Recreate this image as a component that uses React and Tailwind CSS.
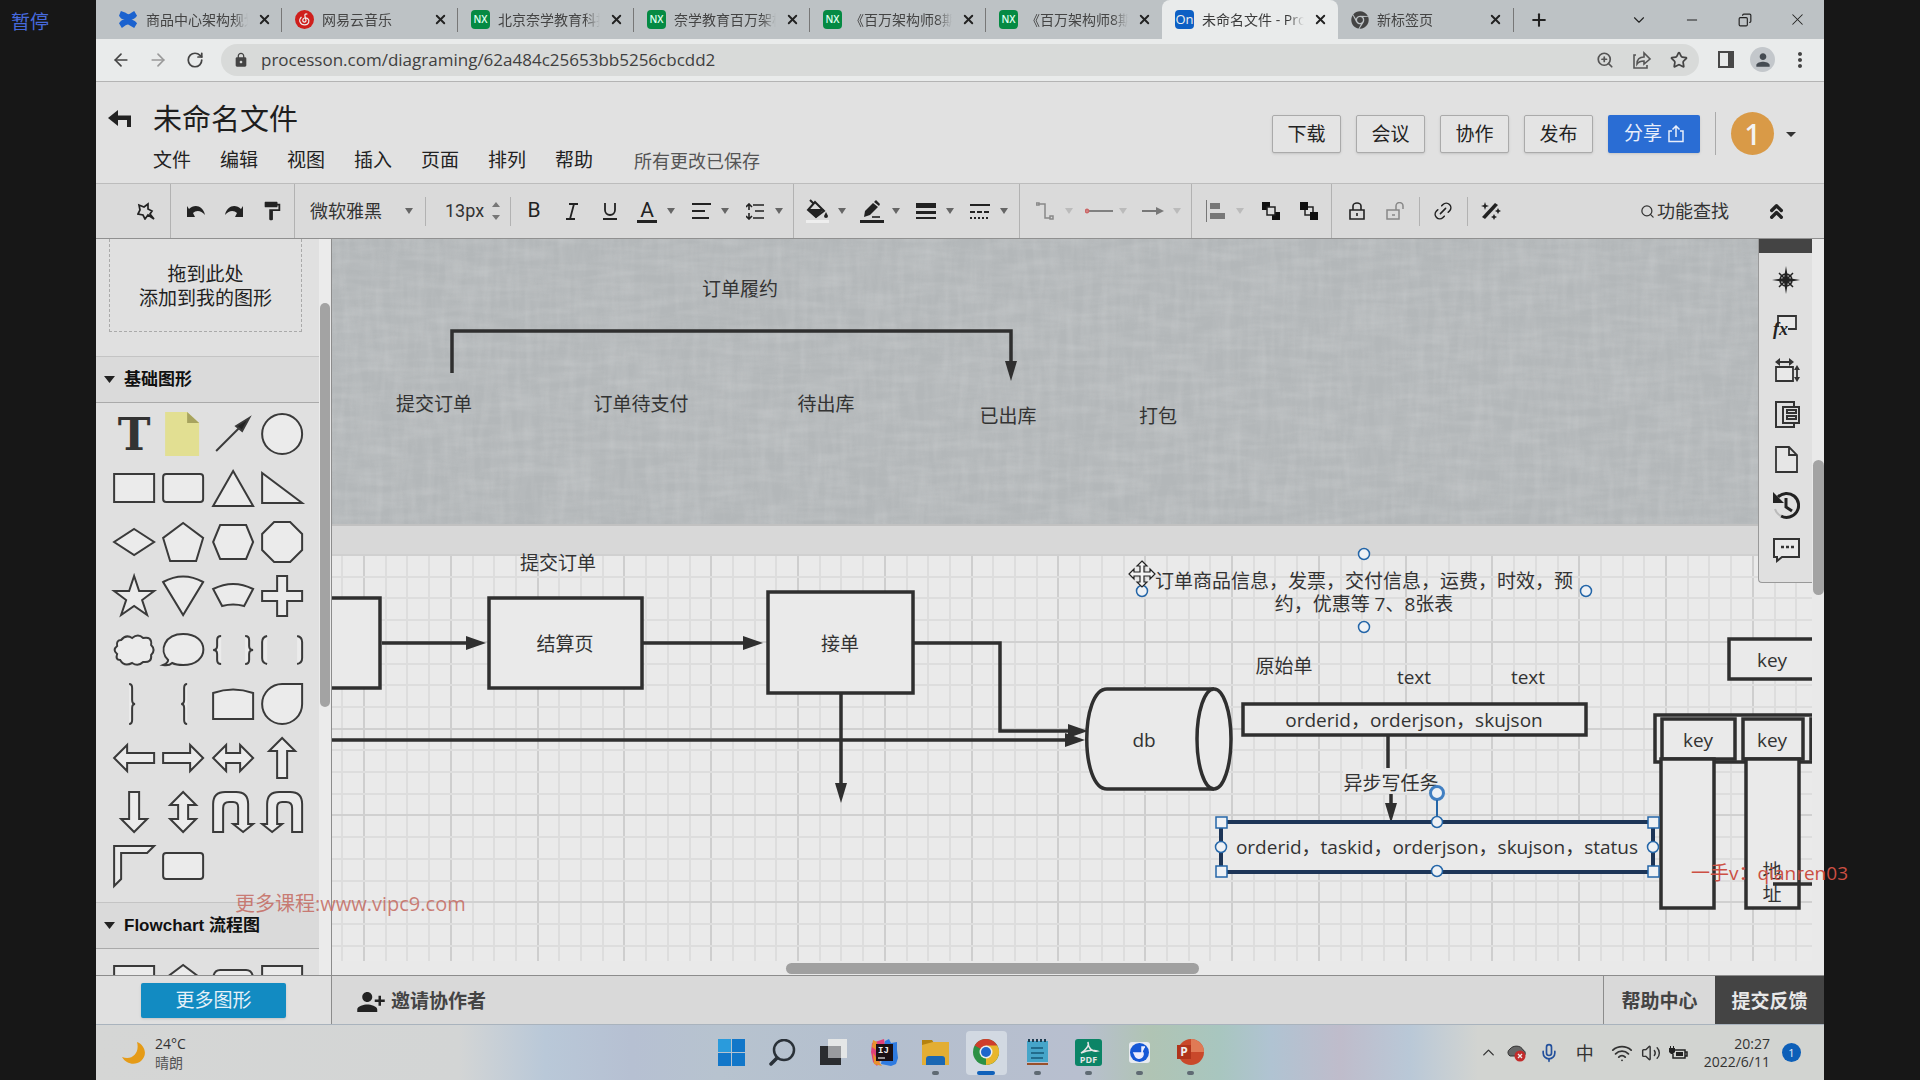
import React from 'react';
import {
  ArrowLeft, ArrowRight, RotateCw, Star, X, Plus, ChevronDown, ChevronUp, Minus, ZoomIn,
  Search, Link2, Mic, Wifi, Volume2, ChevronsUp, Copy,
} from 'lucide-react';
import {
  MdLock, MdPerson, MdMoreVert, MdFormatPaint, MdPersonAddAlt1, MdArrowDropDown,
} from 'react-icons/md';
import { FaChrome } from 'react-icons/fa';

const tabs = [
  { title: '商品中心架构规划', icon: 'confluence' },
  { title: '网易云音乐', icon: 'music' },
  { title: '北京奈学教育科技有', icon: 'nx' },
  { title: '奈学教育百万架构师', icon: 'nx' },
  { title: '《百万架构师8期》', icon: 'nx' },
  { title: '《百万架构师8期》', icon: 'nx' },
  { title: '未命名文件 - ProcessOn', icon: 'on', active: true },
  { title: '新标签页', icon: 'chrome' },
];

const menus = ['文件', '编辑', '视图', '插入', '页面', '排列', '帮助'];

const Favicon = ({ type }) => {
  if (type === 'confluence') {
    return (
      <svg className="size-[19px] shrink-0" viewBox="0 0 20 20" fill="#1b62cf">
        <path d="M2 1l5 2c2 2 4 2 6 0l3-2 3 5c-3 4-5 4-6 4s3 0 6 4l-3 5-5-3c-1-1-2-1-4 0l-4 3-3-5c2-3 4-4 6-4-3 0-4-1-6-4z" />
      </svg>
    );
  }
  if (type === 'music') {
    return (
      <svg className="size-[19px] shrink-0" viewBox="0 0 20 20">
        <circle cx="10" cy="10" r="10" fill="#cf1f1c" />
        <path d="M13 4.500c-2-1-3 0-2.500 2l1 4a1.700 1.700 0 1 1-3.200 0c0-2 3-3 5-1.500 2.500 2 1.500 6.500-3 6.700-5 0-7-5-3.500-8.500" fill="none" stroke="#eee" strokeWidth="1.300" />
      </svg>
    );
  }
  if (type === 'nx') {
    return <span className="flex size-[19px] shrink-0 items-center justify-center rounded bg-[#058a43] text-[10px] font-semibold text-[#dfe]">NX</span>;
  }
  if (type === 'on') {
    return <span className="flex size-[19px] shrink-0 items-center justify-center rounded-sm bg-[#0d5fc4] text-[13px] text-[#eee]">On</span>;
  }
  return <FaChrome className="size-[18px] shrink-0 text-[#444]" />;
};

const TabStrip = () => (
  <div className="flex h-[39px] shrink-0 items-center bg-[#bdc2c5] pl-[10px]">
    {tabs.map((tab, i) => (
      <div
        key={i}
        className={
          tab.active
            ? 'flex h-full w-44 items-center rounded-t-lg bg-[#e9ebeb] pl-[13px] text-[#3c3c3c]'
            : 'flex h-full w-44 items-center pl-[13px] text-[#444]'
        }
      >
        <button className="flex items-center gap-2 text-left">
          <Favicon type={tab.icon} />
          <span className="w-[102px] overflow-hidden text-sm whitespace-nowrap [mask-image:linear-gradient(to_right,black_85%,transparent)]">{tab.title}</span>
        </button>
        <button className="ml-[6px] flex w-5 justify-center" aria-label="关闭标签页">
          <X className="size-[15px] text-[#222]" strokeWidth={3} />
        </button>
        {!tab.active && i !== 5 && <span className="ml-auto h-6 w-px bg-[#777]" />}
      </div>
    ))}
    <button className="ml-[15px]" aria-label="新建标签页"><Plus className="size-[20px] text-[#222]" strokeWidth={2.500} /></button>
    <div className="ml-auto flex h-8 items-center text-[#222]">
      <button className="flex w-[53px] justify-center" aria-label="搜索标签页"><ChevronDown className="size-[18px]" strokeWidth={1.500} /></button>
      <button className="flex w-[53px] justify-center" aria-label="最小化"><Minus className="size-4" strokeWidth={1.500} /></button>
      <button className="flex w-[53px] justify-center" aria-label="还原"><Copy className="size-[14px] -scale-x-100" strokeWidth={2} /></button>
      <button className="flex w-[53px] justify-center" aria-label="关闭"><X className="size-[19px]" strokeWidth={1.300} /></button>
    </div>
  </div>
);

const AddressBar = () => (
  <div className="flex h-[43px] shrink-0 items-center border-b border-[#b4b4b4] bg-[#e9ebeb] px-[6px] pb-px">
    <button className="flex w-[37px] justify-center" aria-label="后退"><ArrowLeft className="size-5 text-[#444]" /></button>
    <button className="flex w-[37px] justify-center" aria-label="前进"><ArrowRight className="size-5 text-[#999]" /></button>
    <button className="flex w-[37px] justify-center" aria-label="刷新"><RotateCw className="size-[18px] text-[#444]" strokeWidth={2.300} /></button>
    <div className="ml-2 flex h-8 flex-1 items-center rounded-full bg-[#d8dad9] pr-[2px] pl-3">
      <MdLock className="size-4 text-[#444]" />
      <input
        aria-label="地址"
        className="ml-3 flex-1 bg-transparent text-[17px] text-[#3f3f3f] outline-none"
        defaultValue="processon.com/diagraming/62a484c25653bb5256cbcdd2"
      />
      <button className="flex w-[37px] justify-center" aria-label="缩放"><ZoomIn className="size-[18px] text-[#555]" strokeWidth={2.300} /></button>
      <button className="flex w-[37px] justify-center" aria-label="分享">
        <svg className="size-5 text-[#555]" viewBox="0 0 20 20" fill="none" stroke="currentColor" strokeWidth="1.600">
          <path d="M4 5H2v13h13v-3M5 14c0-5 3-7 7-7V3l6 6-6 5v-3c-3 0-5 0-7 3z" />
        </svg>
      </button>
      <button className="flex w-[37px] justify-center" aria-label="收藏"><Star className="size-[18px] text-[#444]" strokeWidth={2.300} /></button>
    </div>
    <button className="ml-2 flex w-[37px] justify-center" aria-label="侧边栏">
      <span className="h-[17px] w-4 border-2 border-r-[6px] border-[#484848]" />
    </button>
    <button className="flex w-[37px] justify-center" aria-label="个人资料">
      <span className="flex size-[25px] items-center justify-center rounded-full bg-[#c3c7cb]"><MdPerson className="size-5 text-[#454b52]" /></span>
    </button>
    <button className="flex w-[37px] justify-center" aria-label="更多"><MdMoreVert className="size-6 text-[#444]" /></button>
  </div>
);

const Header = () => (
  <header className="flex h-[101px] shrink-0 items-center bg-[#e1e1e1] pr-[21px] pl-3">
    <div className="flex pt-3">
      <button className="mt-[10px] h-5 w-[45px]" aria-label="返回">
        <svg width="24" height="18" viewBox="0 0 24 18">
          <path d="M0 8L10 0v5.500h13V17h-4V10H10v6z" fill="#222" />
        </svg>
      </button>
      <div>
        <h1 className="text-[29px] leading-10 text-[#1e1e1e]">未命名文件</h1>
        <nav className="mt-1 flex h-9 items-center gap-[29px] text-[19px] text-[#222]">
          {menus.map((m) => <button key={m}>{m}</button>)}
          <span className="ml-3 text-lg text-[#555]">所有更改已保存</span>
        </nav>
      </div>
    </div>
    <div className="ml-auto flex items-center gap-[15px] pt-[2px] text-[19px] text-[#222]">
      {['下载', '会议', '协作', '发布'].map((b) => (
        <button key={b} className="h-[38px] w-[69px] rounded-xs border border-[#aaa] bg-[#e4e4e4] leading-[34px] shadow-sm">{b}</button>
      ))}
      <button className="flex h-[38px] w-[92px] items-center justify-center gap-[6px] rounded-xs bg-[#2a6dd4] text-[#e8eefa] shadow-sm">
        分享
        <svg width="16" height="18" viewBox="0 0 16 18" fill="none" stroke="currentColor" strokeWidth="1.500">
          <path d="M4 6H1v10.500h14V6h-3M8 12V1M4.500 4.500L8 1l3.500 3.500" />
        </svg>
      </button>
      <span className="h-[43px] w-px bg-[#aaa]" />
      <div className="flex items-center">
        <span className="flex size-[43px] items-center justify-center rounded-full bg-[#d99a47] text-[28px] leading-none font-semibold text-[#f3f3f3]">1</span>
        <button className="ml-[5px]" aria-label="账户菜单"><MdArrowDropDown className="size-6 text-[#333]" /></button>
      </div>
    </div>
  </header>
);

const Caret = ({ dim }) => (
  <svg className={dim ? 'size-2 text-[#bbb]' : 'size-2 text-[#666]'} viewBox="0 0 8 8" fill="currentColor"><path d="M0 1h8L4 7z" /></svg>
);

const Tool = ({ label, children }) => (
  <button className="flex h-9 w-[38px] items-center justify-center text-[#222]" aria-label={label}>{children}</button>
);

const DropTool = ({ label, dim, children }) => (
  <button className="flex h-9 w-[54px] items-center text-[#222]" aria-label={label} disabled={dim}>
    <span className="flex w-9 justify-center">{children}</span>
    <span className="ml-[2px]"><Caret dim={dim} /></span>
  </button>
);

const Line = ({ children, className, w = 20, h = 20, sw = 1.8 }) => (
  <svg className={className} width={w} height={h} viewBox={`0 0 ${w} ${h}`} fill="none" stroke="currentColor" strokeWidth={sw}>{children}</svg>
);

const Divider = () => <span className="h-[29px] w-px bg-[#b2b2b2]" />;

const FormatBar = () => (
  <div className="flex h-14 shrink-0 items-center border-t border-b border-t-[#bcbcbc] border-b-[#909090] bg-[#dadada]">
    <div className="flex h-full w-[75px] items-center border-r border-[#b2b2b2] pl-[31px]">
      <Tool label="标记">
        <Line w={18} h={18} sw={1.7}><path d="M11 2L7 5 2 3l1 5-2 4 5 1 2 4 3-4 6 4-4-5 2-3-4-2z" /></Line>
      </Tool>
    </div>
    <div className="flex h-full w-31 items-center border-r border-[#b2b2b2] pl-[6px]">
      <Tool label="撤销"><svg width="18" height="13" viewBox="0 0 18 13" fill="currentColor"><path d="M0 1l2 3c5-5 14-4 16 6-4-5-9-5-12-2l2 4H0z" /></svg></Tool>
      <Tool label="重做"><svg width="18" height="13" viewBox="0 0 18 13" fill="currentColor"><path d="M18 1l-2 3C11-1 2 0 0 10c4-5 9-5 12-2l-2 4h8z" /></svg></Tool>
      <Tool label="格式刷"><MdFormatPaint className="size-[22px]" /></Tool>
    </div>
    <div className="flex h-full w-[499px] items-center border-r border-[#b2b2b2]">
      <div className="flex w-[130px] items-center pl-[15px]">
        <select aria-label="字体" className="w-[95px] appearance-none bg-transparent text-lg text-[#333] outline-none" defaultValue="微软雅黑">
          <option>微软雅黑</option>
        </select>
        <Caret />
      </div>
      <Divider />
      <div className="flex w-[84px] items-center pl-[19px]">
        <input aria-label="字号" className="w-[47px] bg-transparent font-['Roboto'] text-lg text-[#333] outline-none" defaultValue="13px" />
        <svg width="8" height="20" viewBox="0 0 8 20" fill="#777"><path d="M0 6h8L4 1zM0 14h8l-4 5z" /></svg>
      </div>
      <Divider />
      <div className="flex pl-1">
        <Tool label="加粗"><span className="font-['Roboto'] text-[21px]">B</span></Tool>
        <Tool label="斜体"><Line w={14} h={17}><path d="M4 1h9M1 16h9M9 1L5 16" /></Line></Tool>
        <Tool label="下划线"><Line w={14} h={17}><path d="M2 0v7a5 5 0 0 0 10 0V0M0 16h14" /></Line></Tool>
        <DropTool label="文字颜色">
          <span className="border-b-[3px] border-[#222] px-[3px] font-['Roboto'] text-[21px] leading-5">A</span>
        </DropTool>
        <DropTool label="对齐"><Line w={19} h={16}><path d="M0 1h19M0 8h13M0 15h17" /></Line></DropTool>
        <DropTool label="行高"><Line w={18} h={17} sw={1.6}><path d="M7 2h11M9 8h9M7 15h11M3 1v6M3 10v6M0 4l3-3 3 3M0 13l3 3 3-3" /></Line></DropTool>
      </div>
    </div>
    <div className="flex h-full w-[226px] items-center border-r border-[#b2b2b2] pl-[6px]">
      <DropTool label="填充">
        <svg width="24" height="24" viewBox="0 0 24 24">
          <path d="M4 1l4 4M9 3l9 9-8 6-8-7z" fill="none" stroke="#222" strokeWidth="2" />
          <path d="M2 10h16l-8 9zM20 13l2 4a2 2 0 1 1-4 0z" fill="#222" />
          <path d="M0 21h23v3H0z" fill="#eee" />
        </svg>
      </DropTool>
      <DropTool label="线条颜色">
        <svg width="24" height="24" viewBox="0 0 24 24">
          <path d="M4 18l1-6 8-8 5 4-8 8zM14 3l2-2 4 4-1 2z" fill="#222" />
          <path d="M12 18h8" stroke="#222" strokeWidth="1.600" />
          <path d="M0 21h24v3H0z" fill="#222" />
        </svg>
      </DropTool>
      <DropTool label="线宽">
        <svg width="20" height="17" viewBox="0 0 20 17" fill="currentColor"><path d="M0 0h20v5H0zM0 8h20v3H0zM0 14h20v2H0z" /></svg>
      </DropTool>
      <DropTool label="线型">
        <Line w={20} h={17} sw={2}><path d="M0 2h20" /><path d="M0 9h20" strokeDasharray="5 2" /><path d="M0 15h20" strokeDasharray="2 2" /></Line>
      </DropTool>
    </div>
    <div className="flex h-full w-[172px] items-center border-r border-[#b2b2b2] pl-[7px]">
      <DropTool label="连线类型" dim>
        <Line w={18} h={18} sw={1.5} className="text-[#888]"><path d="M3 2h6v14h5M0 1h3v2H0zM14 14h3v3h-3z" /></Line>
      </DropTool>
      <DropTool label="起点" dim>
        <Line w={28} h={10} sw={1.8} className="text-[#777]"><path d="M3 5h25" /><circle cx="2" cy="5" r="1.500" stroke="#c66" /></Line>
      </DropTool>
      <DropTool label="终点" dim>
        <svg width="22" height="10" viewBox="0 0 22 10" fill="#777"><path d="M0 4h14V1l8 4-8 4V6H0z" /></svg>
      </DropTool>
    </div>
    <div className="flex h-full w-[140px] items-center border-r border-[#b2b2b2] pl-[6px]">
      <DropTool label="对齐方式" dim>
        <svg width="20" height="22" viewBox="0 0 20 22" fill="#777"><path d="M0 0h1v22H0zM4 3h10v6H4zM4 13h15v6H4z" /></svg>
      </DropTool>
      <Tool label="置于顶层">
        <svg width="18" height="18" viewBox="0 0 18 18"><path d="M0 0h8v8H0zM10 10h8v8h-8z" fill="#111" /><path d="M5 5h8v8H5z" fill="#ddd" stroke="#222" strokeWidth="1.500" /></svg>
      </Tool>
      <Tool label="置于底层">
        <svg width="18" height="18" viewBox="0 0 18 18"><path d="M5 5h8v8H5z" fill="#ddd" stroke="#222" strokeWidth="1.500" /><path d="M0 0h8v8H0zM10 10h8v8h-8z" fill="#111" /></svg>
      </Tool>
    </div>
    <div className="flex items-center pl-[6px]">
      <Tool label="锁定"><Line w={16} h={18} sw={1.6}><path d="M1 8h14v9H1zM4 8V4a4 3 0 0 1 8 0v4M8 11v3" /></Line></Tool>
      <Tool label="解锁"><Line w={18} h={18} sw={1.5} className="text-[#888]"><path d="M1 8h12v9H1zM10 8V4a3 3 0 0 1 7 0v3M6 13h3" /></Line></Tool>
      <span className="ml-[5px] flex"><Divider /></span>
      <span className="ml-1"><Tool label="链接"><Link2 className="size-[22px] -rotate-45" strokeWidth={1.700} /></Tool></span>
      <span className="ml-[5px] flex"><Divider /></span>
      <span className="ml-1">
        <Tool label="美化">
          <svg width="20" height="18" viewBox="0 0 20 18" fill="currentColor">
            <path d="M1 15L14 1l3 2L4 17z" />
            <path d="M4 0l1 3 3 1-3 1-1 3-1-3-3-1 3-1zM17 6l1 2 2 1-2 1-1 2-1-2-2-1 2-1zM13 12l1 2 2 1-2 1-1 2-1-2-2-1 2-1z" />
          </svg>
        </Tool>
      </span>
    </div>
    <button className="ml-auto flex items-center gap-[2px] text-lg text-[#333]"><Search className="size-[15px]" strokeWidth={2} />功能查找</button>
    <button className="mr-9 ml-9" aria-label="收起"><ChevronsUp className="size-[23px] text-[#222]" strokeWidth={3.500} /></button>
  </div>
);

// library shapes, drawn around a centre of 0,0
const basicShapes = [
  'text', 'note', 'line', 'M20 0A20 20 0 1 1-20 0A20 20 0 1 1 20 0Z',
  'M-20-14H20V14H-20Z',
  'M-17-14H17Q20-14 20-11V11Q20 14 17 14H-17Q-20 14-20 11V-11Q-20-14-17-14Z',
  'M0-17L20 18H-20Z', 'M-20-15V15H20Z',
  'M0-13L20 0L0 13L-20 0Z', 'M0-19L20-4L13 19H-13L-20-4Z', 'M-13-17H13L20 0L13 17H-13L-20 0Z', 'M-8-20H8L20-8V8L8 20H-8L-20 8V-8Z',
  'M0-20L5-5H20L8 4L13 19L0 10L-13 19L-8 4L-20-5H-5Z', 'M-20-14Q0-25 20-14L0 19Z', 'M-20-7Q0-17 20-7L11 10Q0 7-11 10Z', 'M-5-20H5V-5H20V5H5V20H-5V5H-20V-5H-5Z',
  'M-13-10Q-8-16-2-12Q4-17 9-12Q18-14 17-5Q22 0 17 5Q18 13 9 12Q4 17-2 13Q-10 17-14 10Q-19 10-17 4Q-22 0-17-4Q-18-10-13-10Z',
  'M-15 10C-25 0-18-16 0-16C27-16 27 15 0 15Q-7 15-11 13Q-14 16-20 15Q-15 13-15 10Z',
  'M-12-14Q-16-14-16-10V-4Q-16 0-20 0Q-16 0-16 4V10Q-16 14-12 14M12-14Q16-14 16-10V-4Q16 0 20 0Q16 0 16 4V10Q16 14 12 14',
  'M-15-14Q-20-13-20-8V8Q-20 13-15 14M15-14Q20-13 20-8V8Q20 13 15 14',
  'M-5-20Q-2-20-2-16V-4Q-2 0 1 0Q-2 0-2 4V16Q-2 20-5 20', 'M4-20Q1-20 1-16V-4Q1 0-2 0Q1 0 1 4V16Q1 20 4 20', 'M-20-11Q0-18 20-11V15H-20Z', 'M0-20H20V0A20 20 0 1 1 0-20Z',
  'M-20 0L-7-13V-5H20V5H-7V13Z', 'M20 0L7-13V-5H-20V5H7V13Z', 'M-20 0L-7-13V-5H7V-13L20 0L7 13V5H-7V13Z', 'M0-20L13-7H5V20H-5V-7H-13Z',
  'M0 20L13 7H5V-20H-5V7H-13Z', 'M0-20L13-7H5V7H13L0 20L-13 7H-5V-7H-13Z',
  'M-20 20V-8Q-20-20-8-20H3Q15-20 15-8V12H20L10 20L0 12H5V-5Q5-10 0-10H-4Q-10-10-10-4V20Z',
  'M20 20V-8Q20-20 8-20H-3Q-15-20-15-8V12H-20L-10 20L0 12H-5V-5Q-5-10 0-10H4Q10-10 10-4V20Z',
  'M-20-20H20L13-13H-13V13L-20 20Z', 'M-17-13H17Q20-13 20-10V10Q20 13 17 13H-17Q-20 13-20 10V-10Q-20-13-17-13Z',
];

const flowShapes = ['M-20-14H20V14H-20Z', 'M0-15L20 0L0 15L-20 0Z', 'M-13-10H13Q20-10 20 0Q20 10 13 10H-13Q-20 10-20 0Q-20-10-13-10Z', 'M-20-14H20V10H-20Z'];

const LibraryShape = ({ d }) => (
  <svg className="h-[54px] w-full" viewBox="-25 -27 49 54" fill="#ebebeb" stroke="#3a3a3a" strokeWidth="2">
    {d === 'text' && <text y="16" textAnchor="middle" stroke="none" className="fill-[#333] font-['DejaVu_Serif'] text-[44px] font-bold">T</text>}
    {d === 'note' && (
      <g stroke="none">
        <path d="M-18-22H4L16-11V22H-18Z" fill="#e2df92" />
        <path d="M4-22V-11H16Z" fill="#a7a35e" />
      </g>
    )}
    {d === 'line' && (
      <g>
        <path d="M-17 17L8-8" />
        <path d="M16-16L3-8L9-3Z" fill="#222" />
      </g>
    )}
    {d.startsWith('M') && <path d={d} />}
  </svg>
);

const Section = ({ title, shapes }) => (
  <section>
    <h2 className="border-t border-b border-t-[#c4c4c4] border-b-[#aaa] bg-[#dadada]">
      <button className="flex h-[45px] w-full items-center gap-[9px] pl-2 font-['Liberation_Sans','Noto_Sans_CJK_SC',sans-serif] text-[17px] font-bold text-[#111]">
        <svg width="11" height="7" viewBox="0 0 11 7" fill="#222"><path d="M0 0h11L5.500 7z" /></svg>
        {title}
      </button>
    </h2>
    <div className="grid grid-cols-4 px-[13px] pt-1 pb-[9px]">
      {shapes.map((d, i) => <LibraryShape key={i} d={d} />)}
    </div>
  </section>
);

const ShapePanel = () => (
  <aside className="flex w-[236px] shrink-0 flex-col border-r border-[#8c8c8c] bg-[#e0e0e0]">
    <div className="flex min-h-0 flex-1">
      <div className="min-w-0 flex-1 overflow-hidden">
        <div className="mr-[17px] mb-6 ml-[13px] flex h-[93px] flex-col justify-center border border-t-0 border-dashed border-[#aaa] pt-px text-center text-[19px] leading-6 text-[#222]">
          <p>拖到此处</p>
          <p>添加到我的图形</p>
        </div>
        <Section title="基础图形" shapes={basicShapes} />
        <Section title="Flowchart 流程图" shapes={flowShapes} />
      </div>
      <div className="w-3 bg-[#ebebeb] pt-16 pl-px">
        <div className="h-[404px] w-[10px] rounded-full bg-[#a3a3a3]" />
      </div>
    </div>
    <div className="flex h-[49px] shrink-0 items-center border-t border-[#8c8c8c] pl-[45px]">
      <button className="h-[35px] w-[145px] rounded-xs bg-[#128bc2] text-[19px] leading-8 text-[#e6f1f8] shadow-sm">更多图形</button>
    </div>
  </aside>
);

const labels = [
  [740, 289, '订单履约'], [434, 404, '提交订单'], [641, 404, '订单待支付'], [826, 404, '待出库'],
  [1008, 416, '已出库'], [1158, 416, '打包'], [558, 563, '提交订单'], [565, 644, '结算页'], [840, 644, '接单'],
  [1284, 666, '原始单'], [1364, 581, '订单商品信息，发票，交付信息，运费，时效，预'], [1364, 604, '约，优惠等 7、8张表'],
  [1391, 783, '异步写任务'], [1772, 871, '地'], [1772, 894, '址'],
  [1144, 740, 'db'], [1414, 677, 'text'], [1528, 677, 'text'], [1414, 720, 'orderid，orderjson，skujson'],
  [1437, 847, 'orderid，taskid，orderjson，skujson，status'], [1772, 660, 'key'], [1698, 740, 'key'], [1772, 740, 'key'],
];

const boxes = [
  [300, 598, 80, 90], [489, 598, 153, 90], [768, 592, 145, 101], [1243, 704, 343, 31],
  [1729, 639, 120, 40], [1655, 715, 200, 47], [1662, 719, 73, 40], [1743, 719, 60, 40], [1811, 719, 60, 40],
  [1661, 759, 53, 149], [1746, 759, 53, 149],
];

const Head = ({ x, y, down }) => (
  <path d={down ? `M${x} ${y}l-6-20h12z` : `M${x} ${y}l-20-7v14z`} fill="#2f2f2f" stroke="none" />
);

const Grid = () => {
  const lines = [];
  for (let i = 0; i < 90; i++) {
    const x = Math.round(342.3 + i * 21.7);
    lines.push(<path key={`x${i}`} d={`M${x} 555V962`} stroke={i % 4 === 1 ? '#cecece' : '#dddddd'} />);
  }
  for (let i = 0; i < 19; i++) {
    const y = Math.round(555 + i * 21.7);
    lines.push(<path key={`y${i}`} d={`M332 ${y}H2400`} stroke={i % 4 === 0 ? '#d0d0d0' : '#dddddd'} />);
  }
  return <g strokeWidth="2">{lines}</g>;
};

const Diagram = () => (
  <svg className="block h-full w-full" role="img" aria-label="流程图">
    <defs>
      <filter id="weaveV" x="0" y="0" width="100%" height="100%">
        <feTurbulence type="fractalNoise" baseFrequency="0.12 0.02" numOctaves="3" seed="4" />
        <feColorMatrix values="0 0 0 0 1  0 0 0 0 1  0 0 0 0 1  0.700 0 0 0 -0.250" />
      </filter>
      <filter id="weaveH" x="0" y="0" width="100%" height="100%">
        <feTurbulence type="fractalNoise" baseFrequency="0.02 0.12" numOctaves="3" seed="9" />
        <feColorMatrix values="0 0 0 0 1  0 0 0 0 1  0 0 0 0 1  0.700 0 0 0 -0.250" />
      </filter>
    </defs>
    {/* scroll position of the sheet */}
    <g transform="translate(-332 -239)">
      <rect x="332" y="239" width="2100" height="285" fill="#b3b7b9" />
      <rect x="332" y="239" width="2100" height="285" filter="url(#weaveV)" opacity="0.250" />
      <rect x="332" y="239" width="2100" height="285" filter="url(#weaveH)" opacity="0.300" />
      <rect x="332" y="524" width="2100" height="31" fill="#d8d8d8" />
      <path d="M332 525H2400" stroke="#aaa" />
      <rect x="332" y="555" width="2100" height="900" fill="#eaeaea" />
      <Grid />
      <g fill="#eaeaea" stroke="#2f2f2f" strokeWidth="3.500">
        {boxes.map(([x, y, w, h], i) => <rect key={i} x={x} y={y} width={w} height={h} />)}
        <path d="M1214 689H1107C1080 689 1080 789 1107 789H1214" />
        <ellipse cx="1214" cy="739" rx="17" ry="50" />
        <g fill="none">
          <path d="M452 373V331H1011V365" />
          <path d="M382 643H470M643 643H748M914 643H1000V731H1072M332 740H1070" />
          <path d="M841 694V788M1388 735V768M1391 794V806M1773 884H1850" />
        </g>
      </g>
      <Head x={1011} y={381} down />
      <Head x={486} y={643} />
      <Head x={763} y={643} />
      <Head x={1088} y={731} />
      <Head x={1085} y={740} />
      <Head x={841} y={803} down />
      <Head x={1391} y={823} down />
      <rect x="1343" y="769" width="90" height="24" fill="#eaeaea" />
      <rect x="1221" y="822" width="432" height="50" fill="#eaeaea" stroke="#1d3557" strokeWidth="4" />
      {labels.map(([x, y, t], i) => (
        <text
          key={i}
          x={x}
          y={y + 7}
          textAnchor="middle"
          className="fill-[#333] font-['Open_Sans','Noto_Sans_CJK_SC',sans-serif] text-[19px]"
        >
          {t}
        </text>
      ))}
      <g fill="#eef1f5" stroke="#2466a8" strokeWidth="1.500">
        {[[1221, 822], [1653, 822], [1221, 871], [1653, 871]].map(([x, y]) => <rect key={`${x}-${y}`} x={x - 5} y={y - 5} width="11" height="11" />)}
        {[[1221, 847], [1653, 847], [1437, 822], [1437, 871], [1364, 554], [1364, 627], [1142, 591], [1586, 591]].map(([x, y]) => (
          <circle key={`${x}-${y}`} cx={x} cy={y} r="5.500" />
        ))}
        <circle cx="1437" cy="793" r="6.500" strokeWidth="3" stroke="#417fc2" />
        <path d="M1437 800V816" strokeWidth="2" />
      </g>
      {/* move cursor */}
      <path
        d="M1142 561l5 5h-3v6h6v-3l5 5-5 5v-3h-6v6h3l-5 5-5-5h3v-6h-6v3l-5-5 5-5v3h6v-6h-3z"
        fill="#f4f4f4" stroke="#222" strokeWidth="1.200"
      />
    </g>
  </svg>
);

const dock = [
  ['导航', (
    <g key="a" fill="#222">
      <path d="M14 0l2 12 12 2-12 2-2 12-2-12-12-2 12-2z" />
      <path d="M7 7l14 14M21 7L7 21" stroke="#222" strokeWidth="1.500" />
      <circle cx="14" cy="14" r="6" fill="none" stroke="#222" strokeWidth="1.600" />
      <circle cx="14" cy="14" r="2.500" />
    </g>
  )],
  ['公式', (
    <g key="b">
      <path d="M6 15V5h18v13h-8" fill="#e8e8e8" stroke="#333" strokeWidth="1.800" />
      <text x="1" y="24" className="fill-[#222] font-['Liberation_Serif'] text-[18px] font-bold italic">fx</text>
    </g>
  )],
  ['尺寸', (
    <g key="c" fill="none" stroke="#333" strokeWidth="1.800">
      <path d="M4 11h17v14H4z" fill="#e8e8e8" />
      <path d="M5 6h15M25 11v13" />
      <path d="M3 6l5-4v8zM22 6l-5-4v8zM25 9l-3 5h6zM25 26l-3-5h6z" fill="#333" stroke="none" />
    </g>
  )],
  ['页面', (
    <g key="d" fill="none" stroke="#333" strokeWidth="2">
      <path d="M22 6V1H4v25h18v-4" />
      <path d="M11 6h16v16H11zM15 9h9v3h-9zM15 15h9v3h-9z" />
    </g>
  )],
  ['文档', <path key="e" d="M4 1h13l8 8v17H4zM17 1v8h8" fill="#e6e6e6" stroke="#333" strokeWidth="1.800" />],
  ['历史', (
    <g key="f" fill="none" stroke="#222">
      <path d="M6 6A12 12 0 1 1 9 25" strokeWidth="3" />
      <path d="M9 25A12 12 0 0 1 3 18" strokeWidth="2" stroke="#bbb" />
      <path d="M14 7v9l6 4" strokeWidth="3" />
      <path d="M1 1v11h11z" fill="#222" stroke="none" />
    </g>
  )],
  ['评论', (
    <g key="g">
      <path d="M2 3h25v18H10l-5 4v-4H2z" fill="#e8e8e8" stroke="#333" strokeWidth="2" />
      <path d="M9 11h3M14 11h3M19 11h3" stroke="#333" strokeWidth="2.500" />
    </g>
  )],
];

const Dock = () => (
  <div className="absolute top-0 right-0 w-[54px] rounded-bl border-b border-l border-[#999] bg-[#e0e0e0]">
    <div className="h-[14px] bg-[#444]" />
    <div className="flex flex-col items-center gap-[17px] pt-[13px] pb-[18px]">
      {dock.map(([name, icon]) => (
        <button key={name} aria-label={name}>
          <svg className="block" width="28" height="28" viewBox="0 0 28 28">{icon}</svg>
        </button>
      ))}
    </div>
  </div>
);

const Workspace = () => (
  <main className="flex min-w-0 flex-1 flex-col">
    <div className="flex min-h-0 flex-1">
      <div className="flex min-w-0 flex-1 flex-col">
        <div className="relative min-h-0 flex-1 overflow-hidden">
          <Diagram />
          <Dock />
        </div>
        <div className="flex h-[14px] items-center bg-[#e9e9e9] px-[454px]">
          <div className="h-[11px] w-[413px] shrink-0 rounded-full bg-[#a0a0a0]" />
        </div>
      </div>
      <div className="w-3 shrink-0 bg-[#e9e9e9] pt-[221px] pl-px">
        <div className="h-[135px] rounded-full bg-[#a3a3a3]" />
      </div>
    </div>
    <footer className="flex h-[49px] shrink-0 items-center border-t border-[#8c8c8c] bg-[#d9d9d9] text-[19px] font-bold text-[#444]">
      <button className="flex items-center gap-[5px] pt-[3px] pl-6"><MdPersonAddAlt1 className="size-[30px] text-[#222]" />邀请协作者</button>
      <button className="ml-auto h-full w-28 border-l border-[#8c8c8c] pt-[2px]">帮助中心</button>
      <button className="h-full w-[109px] bg-[#444] pt-[2px] text-[#e8e8e8]">提交反馈</button>
    </footer>
  </main>
);

const apps = [
  { name: '开始', icon: (
    <g fill="#1277c9"><path d="M0 0h13v13H0z" fill="#2a9bdc" /><path d="M14 0h13v13H14zM0 14h13v13H0zM14 14h13v13H14z" /></g>
  ) },
  { name: '搜索', icon: <g fill="none" stroke="#2a3138"><circle cx="15" cy="11" r="10" strokeWidth="2.500" /><path d="M8 19l-6 6" strokeWidth="3.500" strokeLinecap="round" /></g> },
  { name: '任务视图', icon: <g><path d="M8 0h19v19H8z" fill="#e4e6e6" /><path d="M0 7h21v19H0z" fill="#2b2d30" /><path d="M8 7h13v12H8z" fill="#999b9e" /></g> },
  { name: 'IntelliJ IDEA', icon: (
    <g>
      <path d="M1 4l12-4 2 12L6 27l-4-4-2-10z" fill="#e0407a" /><path d="M2 14l9 13-8-2z" fill="#e8912d" />
      <path d="M2 1l4 2-1 8-4-3z" fill="#e8912d" />
      <path d="M14 2l4-2 2 4 6-1v8l1 8-2 6-5 2-10-2z" fill="#2f7be0" />
      <path d="M5 5h17v17H5z" fill="#1b1014" />
      <text x="7" y="14" className="fill-[#eee] font-['Liberation_Mono'] text-[9px] font-bold">IJ</text>
      <path d="M7 19h7" stroke="#eee" strokeWidth="1.200" />
    </g>
  ) },
  { name: '文件资源管理器', dot: true, icon: <g><path d="M0 1h10l2 3h-2v5H0z" fill="#b5820f" /><path d="M0 6l11-3h16v23H0z" fill="#e3ae34" /><path d="M4 26v-6q0-3 3-3h13q3 0 3 3v6z" fill="#1a67b3" /></g> },
  { name: 'Chrome', active: true, icon: (
    <g>
      <circle cx="13" cy="13" r="13" fill="#2c9144" />
      <path d="M13 13L1.700 6.500A13 13 0 0 1 24.300 6.500z" fill="#cf3d2c" />
      <path d="M13 13V26A13 13 0 0 0 24.300 6.500H13z" fill="#e8b62c" />
      <circle cx="13" cy="13" r="6.500" fill="#eee" /><circle cx="13" cy="13" r="5" fill="#1f66cc" />
    </g>
  ) },
  { name: '记事本', dot: true, icon: (
    <g><path d="M3 2h21v21H3z" fill="#46a5c9" /><path d="M3 24h21v2H3z" fill="#99502a" /><path d="M5 3V0M9 3V0M13 3V0M17 3V0M21 3V0" stroke="#1d3d52" strokeWidth="2" /><path d="M7 9h12M7 14h13M7 19h12" stroke="#175a78" strokeWidth="1.500" /></g>
  ) },
  { name: 'PDF', dot: true, icon: (
    <g><rect width="27" height="27" rx="3" fill="#0b8466" /><path d="M6 14C12 10 14 6 13 3C13 9 17 13 22 12C16 10 10 12 6 14z" fill="none" stroke="#e6e6e6" strokeWidth="1.500" /><text x="13.500" y="24" textAnchor="middle" className="fill-[#e6e6e6] text-[9px] font-bold">PDF</text></g>
  ) },
  { name: '音乐', dot: true, icon: (
    <g><rect x="3" y="3" width="21" height="21" rx="3" fill="#e8ebf0" /><circle cx="13.500" cy="13.500" r="9.500" fill="#1658d6" /><path d="M8 14h9a4 4 0 0 1-8 2zM16 14V8h3" fill="#eef" stroke="#eef" strokeWidth="1.500" /></g>
  ) },
  { name: 'PowerPoint', dot: true, icon: (
    <g><circle cx="14" cy="13" r="13" fill="#c9482a" /><path d="M14 0a13 13 0 0 1 13 13H14z" fill="#e07a55" /><path d="M0 6h14v14H0z" fill="#b0341b" /><text x="7" y="17" textAnchor="middle" className="fill-[#eee] text-[12px] font-bold">P</text></g>
  ) },
];

const Taskbar = () => (
  <div className="flex h-14 shrink-0 items-center border-t border-[#a9b3bd] bg-[linear-gradient(to_right,#d5d6d5_0%,#d3d5d5_21%,#b9c8d8_26%,#b6c0d2_31%,#b7c3cf_36%,#b4bfce_45%,#b8bfcf_57%,#b0c4b4_61%,#a8c6bf_65%,#b0c3d2_68%,#bfbccb_72%,#b9c8d7_76%,#d2d4d1_80%,#d2d4d1_100%)] text-sm text-[#333]">
    <div className="flex min-w-0 flex-1 items-center gap-[10px] pl-[26px]">
      <svg width="23" height="24" viewBox="0 0 23 24"><path d="M15 1c8 3 11 13 4 19-6 5-15 3-19-4 10 4 18-4 15-15z" fill="#e59b17" /></svg>
      <div className="leading-[19px]"><p>24°C</p><p className="text-[#555]">晴朗</p></div>
    </div>
    <div className="mr-[2px] flex">
      {apps.map((app) => (
        <button
          key={app.name}
          aria-label={app.name}
          className={app.active
            ? 'mx-[5px] flex h-11 w-[41px] flex-col items-center rounded bg-[#d2d9e2] pt-2'
            : 'flex h-11 w-[51px] flex-col items-center pt-2'}
        >
          <svg width="27" height="27" viewBox="0 0 27 27">{app.icon}</svg>
          {app.dot && <span className="mt-[5px] h-1 w-[7px] rounded-full bg-[#5f6a73]" />}
          {app.active && <span className="mt-[5px] h-1 w-[18px] rounded-full bg-[#1061ba]" />}
        </button>
      ))}
    </div>
    <div className="flex min-w-0 flex-1 items-center justify-end pr-[23px]">
      <ChevronUp className="size-[19px]" strokeWidth={1.700} />
      <svg className="ml-2" width="20" height="18" viewBox="0 0 20 18">
        <path d="M4 12a4 4 0 0 1 0-7C7 1 15 1 17 6c3 1 3 6 0 6z" fill="#666" stroke="#333" />
        <circle cx="14" cy="12" r="5.500" fill="#c22b2b" /><path d="M12 10l4 4M16 10l-4 4" stroke="#eee" strokeWidth="1.300" />
      </svg>
      <Mic className="ml-[13px] size-5 text-[#23509c]" />
      <span className="ml-[17px] text-lg leading-none">中</span>
      <Wifi className="ml-[17px] size-[22px]" strokeWidth={2} />
      <Volume2 className="ml-2 size-5" strokeWidth={1.700} />
      <svg className="ml-2" width="19" height="14" viewBox="0 0 19 14">
        <path d="M6 4h10v8H4V8M16 6h2v4h-2" fill="none" stroke="#222" strokeWidth="1.500" />
        <path d="M7 6h7v4H7zM0 2h6v4L4 8H2L0 6zM1 0h1v2H1zM4 0h1v2H4z" fill="#222" />
      </svg>
      <div className="ml-4 text-right leading-[18px]"><p>20:27</p><p>2022/6/11</p></div>
      <span className="ml-3 flex size-[19px] items-center justify-center rounded-full bg-[#0d5fb8] text-[11px] text-[#e4edf8]">1</span>
    </div>
  </div>
);

export default function App() {
  return (
    <div className="relative h-screen overflow-hidden bg-[#171717] px-24 font-['Open_Sans','Noto_Sans_CJK_SC',sans-serif]">
      <div className="flex h-full flex-col bg-[#e0e0e0]">
        <TabStrip />
        <AddressBar />
        <Header />
        <FormatBar />
        <div className="flex min-h-0 flex-1">
          <ShapePanel />
          <Workspace />
        </div>
        <Taskbar />
      </div>
      {/* recording overlays */}
      <p className="absolute top-2 left-[11px] text-[19px] leading-7 text-[#4669dd]">暂停</p>
      <p className="absolute top-[890px] left-[235px] text-xl leading-7 text-[#c4695f]/85">更多课程:www.vipc9.com</p>
      <p className="absolute top-[859px] right-[72px] text-[19px] leading-7 text-[#cc4f43]">一手v：qianren03</p>
    </div>
  );
}
